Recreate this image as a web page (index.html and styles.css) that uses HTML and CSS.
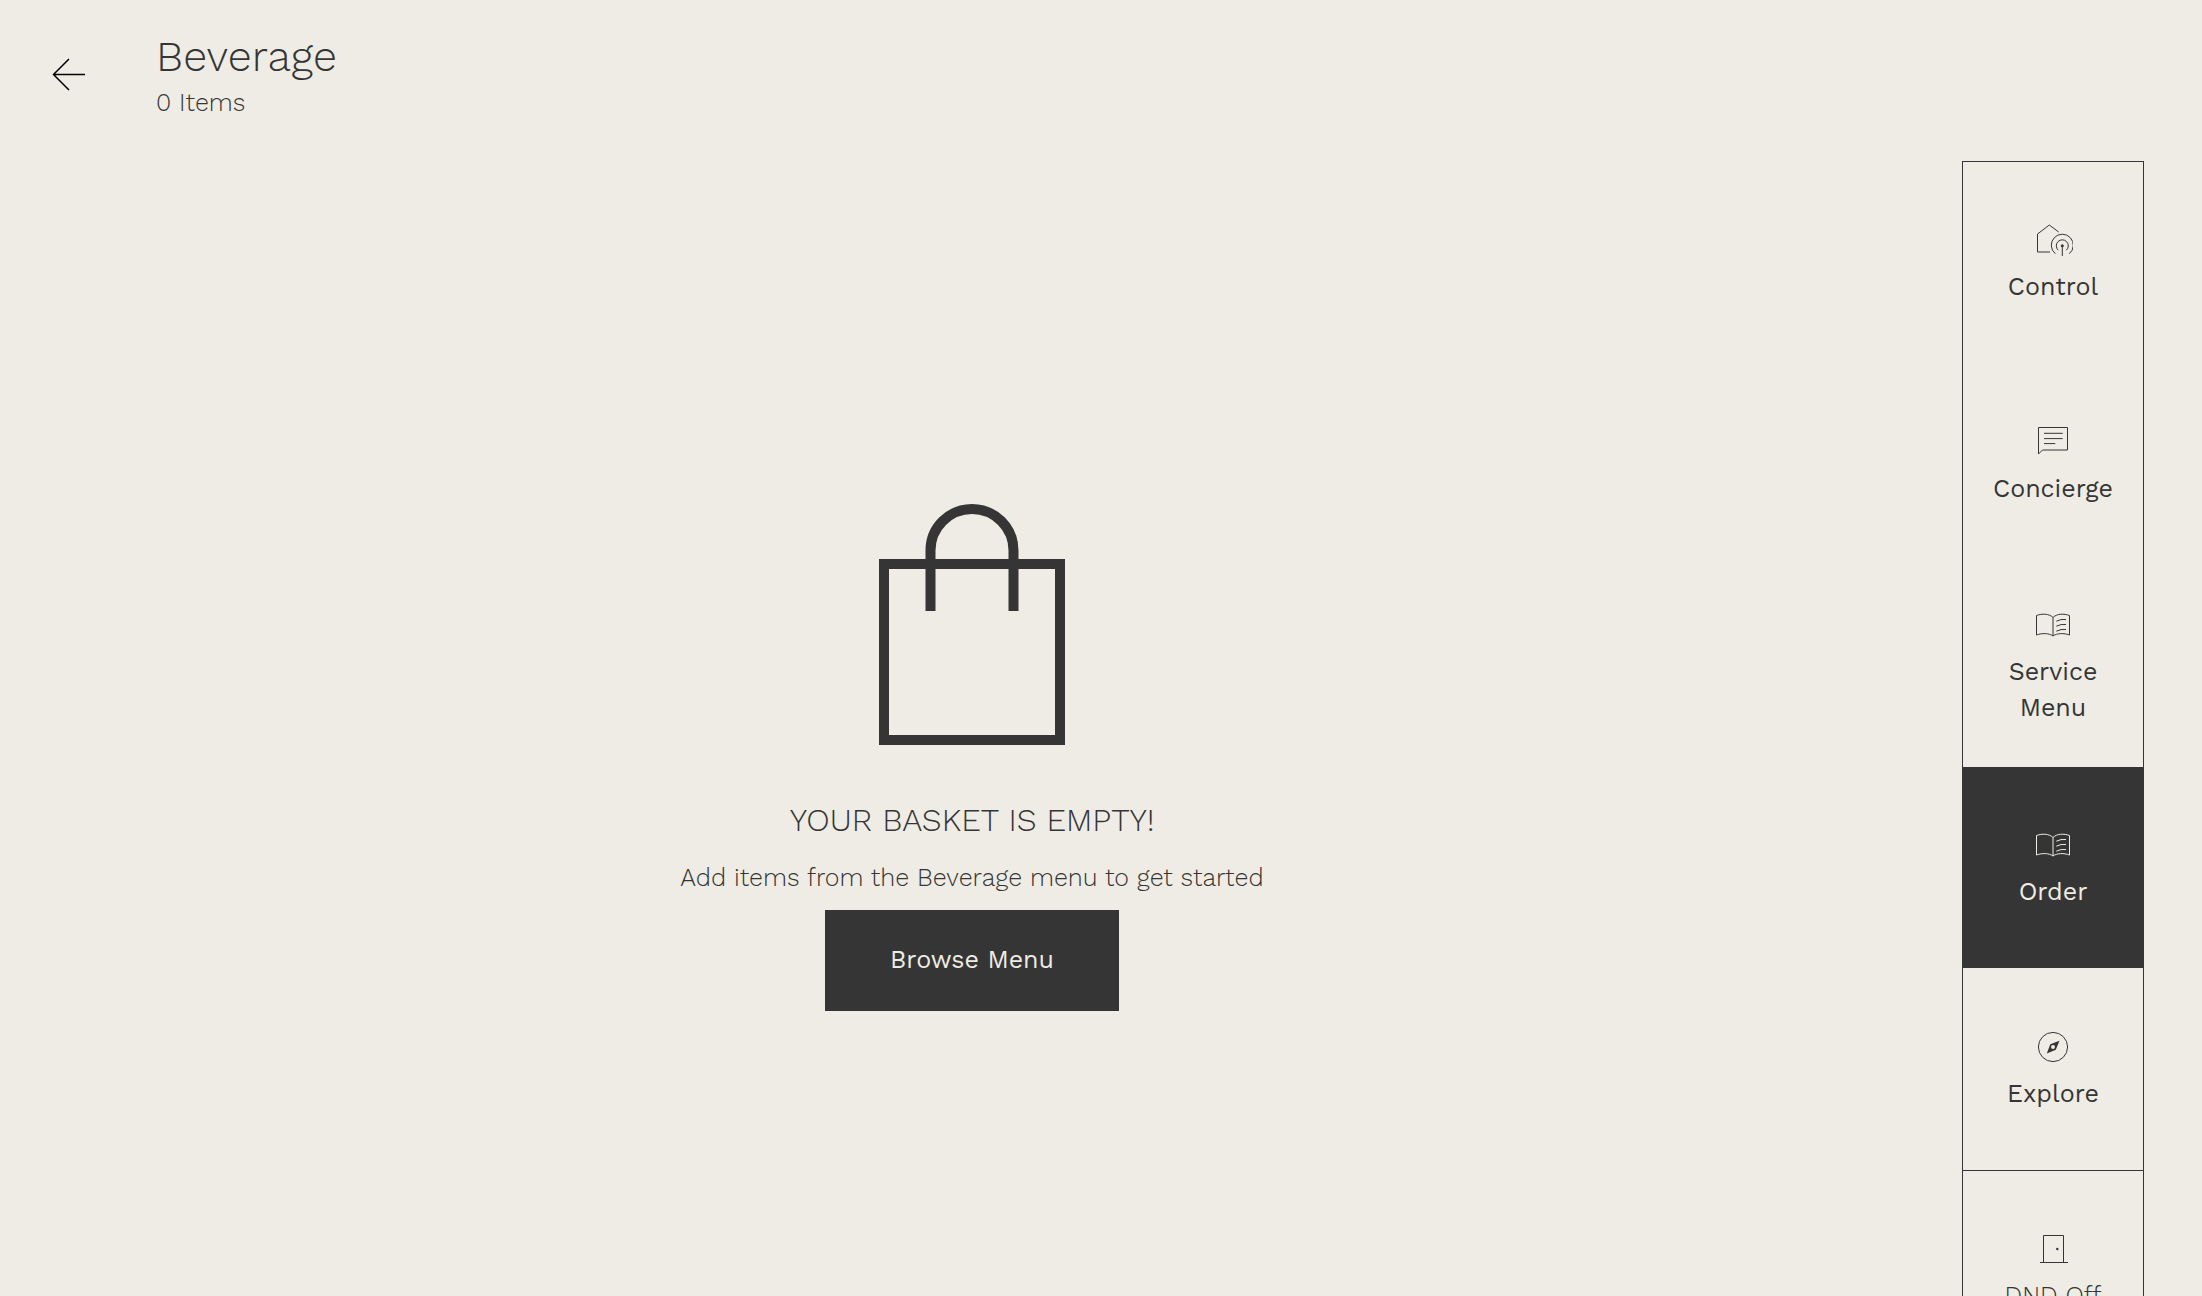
FILE: index.html
```html
<!DOCTYPE html>
<html lang="en">
<head>
    <meta charset="UTF-8">
    <title>Beverage</title>
    <link rel="stylesheet" href="styles.css">
</head>
<body>
<header class="header">
    <a class="back" href="#" aria-label="Back">
        <svg width="34" height="34" viewBox="0 0 34 34">
            <path d="M33 17.5H1.5M17 2L1.5 17.5L17 33"/>
        </svg>
    </a>
    <div class="heading">
        <h1>Beverage</h1>
        <p>0 Items</p>
    </div>
</header>
<div class="content">
    <main class="basket">
        <svg class="bag" viewBox="0 0 356 356">
            <rect x="90" y="118" width="176" height="176"/>
            <path d="M136.500 165V104.500a41.500 41.500 0 0 1 83 0V165"/>
        </svg>
        <h2>YOUR BASKET IS EMPTY!</h2>
        <p>Add items from the Beverage menu to get started</p>
        <button class="browse" type="button">Browse Menu</button>
    </main>
    <nav class="sidebar">
        <div class="group">
            <a class="item" href="#">
                <svg class="icon" viewBox="0 0 40 40">
                    <path d="M17 32H4.500V14L16.300 5L25.700 12"/>
                    <path d="M22.300 33.700a11 11 0 1 1 14 0M25.200 30.200a6 6 0 1 1 8.200 0M29.300 26V36"/>
                    <circle class="fill" cx="29.300" cy="25.700" r="1.500"/>
                </svg>
                <span>Control</span>
            </a>
            <a class="item" href="#">
                <svg class="icon" viewBox="0 0 40 40">
                    <path d="M5.500 5.500H34.500V28H9.500L5.500 32ZM11 11.300H29.700M11 16.600H29.700M11 21.600H22.300"/>
                </svg>
                <span>Concierge</span>
            </a>
            <a class="item" href="#">
                <svg class="icon" viewBox="0 0 40 40">
                    <path d="M20 12.500C16 8.500 9 8.500 3.500 10.500V30C9 28 16 28 20 31C24 28 31 28 36.500 30V10.500C31 8.500 24 8.500 20 12.500ZM20 12.500V31"/>
                    <path d="M23.300 16.200Q28 13.800 33 14.500M23.300 21.200Q28 18.800 33 19.500M23.300 26.200Q28 23.800 33 24.500"/>
                </svg>
                <span>Service Menu</span>
            </a>
            <a class="item active" href="#" aria-current="page">
                <svg class="icon" viewBox="0 0 40 40">
                    <path d="M20 12.500C16 8.500 9 8.500 3.500 10.500V30C9 28 16 28 20 31C24 28 31 28 36.500 30V10.500C31 8.500 24 8.500 20 12.500ZM20 12.500V31"/>
                    <path d="M23.300 16.200Q28 13.800 33 14.500M23.300 21.200Q28 18.800 33 19.500M23.300 26.200Q28 23.800 33 24.500"/>
                </svg>
                <span>Order</span>
            </a>
            <a class="item" href="#">
                <svg class="icon" viewBox="0 0 40 40">
                    <circle cx="20" cy="20" r="14.600"/>
                    <path class="fill" fill-rule="evenodd" d="M26.500 13.800L22.800 22.800L13.800 26.500L17.300 17.300ZM20 18a2 2 0 1 0 0 4a2 2 0 1 0 0-4Z"/>
                </svg>
                <span>Explore</span>
            </a>
        </div>
        <button class="item dnd" type="button">
            <svg class="icon" viewBox="0 0 40 40">
                <path d="M10.500 33.500V6.500H30.500V33.500M7 33.500H35"/>
                <circle class="fill" cx="24.300" cy="20" r="1.200"/>
            </svg>
            <span>DND Off</span>
        </button>
    </nav>
</div>
</body>
</html>
```
FILE: styles.css
```css
* {
    margin: 0;
    padding: 0;
    box-sizing: border-box;
}

body {
    display: flex;
    flex-direction: column;
    height: 100vh;
    overflow: hidden;
    background: #eeece4;
    color: #353535;
    font-family: "Work Sans", Inter, sans-serif;
    font-size: 25px;
    font-weight: 300;
    line-height: 36px;
}

a {
    color: inherit;
    text-decoration: none;
}

button {
    border: none;
    background: none;
    color: inherit;
    font: inherit;
    cursor: pointer;
}

svg {
    display: block;
    fill: none;
    stroke: currentColor;
}

/* header */
.header {
    display: flex;
    gap: 70px;
    padding: 32px 52px 35px;
}

.back {
    padding-top: 25px;
    color: #000;
}

.back svg {
    stroke-width: 1.5;
}

.heading h1 {
    font-size: 43px;
    font-weight: 300;
    line-height: 48px;
}

.heading p {
    line-height: 46px;
}

.content {
    display: flex;
    flex: 1;
    min-height: 0;
    gap: 18px;
    padding-right: 58px;
}

/* empty basket */
.basket {
    display: flex;
    flex: 1;
    flex-direction: column;
    align-items: center;
    justify-content: center;
}

.bag {
    width: 356px;
    height: 356px;
    stroke-width: 10;
}

.basket h2 {
    margin-bottom: 22px;
    font-size: 32px;
    font-weight: 300;
    line-height: 36px;
}

.basket p {
    margin-bottom: 14px;
}

.browse {
    padding: 32px 65px 33px;
    background: #353535;
    color: #eeece4;
    font-weight: 400;
}

/* sidebar */
.sidebar {
    align-self: flex-start;
    width: 182px;
    border: 1px solid #353535;
}

.group {
    display: grid;
    grid-auto-rows: 1fr;
    min-height: 1008px;
}

.item {
    display: flex;
    flex-direction: column;
    align-items: center;
    justify-content: center;
    gap: 9px;
    padding: 0 24px;
    font-weight: 400;
    text-align: center;
}

.icon {
    width: 40px;
    height: 40px;
}

.icon .fill {
    fill: currentColor;
    stroke: none;
}

.active {
    background: #353535;
    color: #eeece4;
}

.dnd {
    width: 100%;
    height: 202px;
    border-top: 1px solid #353535;
    font-weight: 300;
}
```
